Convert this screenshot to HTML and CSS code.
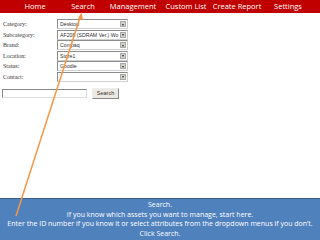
FILE: index.html
```html
<!DOCTYPE html>
<html>
<head>
<meta charset="utf-8">
<link rel="stylesheet" href="styles.css">
</head>
<body>
<div class="page">
  <nav class="nav">
    <span>Home</span>
    <span>Search</span>
    <span>Management</span>
    <span>Custom List</span>
    <span>Create Report</span>
    <span>Settings</span>
  </nav>
  <div class="form">
    <div class="row"><label>Category:</label><div class="sel"><span class="val">Desktop</span><span class="btn"></span></div></div>
    <div class="row"><label>Subcategory:</label><div class="sel"><span class="val">AF208 (SDRAM Ver.) Wo</span><span class="btn"></span></div></div>
    <div class="row"><label>Brand:</label><div class="sel"><span class="val">Compaq</span><span class="btn"></span></div></div>
    <div class="row"><label>Location:</label><div class="sel"><span class="val">Store1</span><span class="btn"></span></div></div>
    <div class="row"><label>Status:</label><div class="sel"><span class="val">Goodie</span><span class="btn"></span></div></div>
    <div class="row"><label>Contact:</label><div class="sel"><span class="val"></span><span class="btn"></span></div></div>
    <div class="search-row">
      <div class="input"></div>
      <div class="button">Search</div>
    </div>
  </div>
  <div class="callout">
    <p>Search.</p>
    <p>If you know which assets you want to manage, start here.</p>
    <p>Enter the ID number if you know it or select attributes from the dropdown menus if you don’t.</p>
    <p>Click Search.</p>
  </div>
  <svg class="arrow" width="320" height="240" viewBox="0 0 320 240">
    <line x1="16" y1="216" x2="80.5" y2="16" stroke="#f79646" stroke-width="1.5"/>
    <polygon points="81.5,12 78,19 83,20" fill="#f79646"/>
  </svg>
</div>
</body>
</html>
```
FILE: styles.css
```css
html, body {
  margin: 0;
  padding: 0;
  background: #fff;
}
.page {
  position: relative;
  width: 320px;
  height: 240px;
  overflow: hidden;
  display: flex;
  flex-direction: column;
}
.nav {
  height: 13px;
  background: #c00000;
  display: grid;
  grid-template-columns: 50px 46px 54px 52px 50px 52px;
  padding-left: 10px;
  color: #fff;
  font-family: "Open Sans", sans-serif;
  font-size: 7.5px;
  line-height: 13px;
  text-align: center;
  white-space: nowrap;
}
.form {
  padding: 6px 0 0 3px;
  font-family: "Liberation Serif", serif;
  font-size: 6px;
  color: #333;
}
.row {
  height: 10.5px;
  display: flex;
  align-items: center;
}
.row label {
  width: 54px;
}
.sel {
  width: 69px;
  height: 8px;
  border: 1px solid;
  border-color: #8c8c8c #d0d0d0 #d0d0d0 #8c8c8c;
  display: flex;
  align-items: center;
  font-family: "Liberation Sans", sans-serif;
  font-size: 5.2px;
  color: #333;
  background: #fff;
}
.val {
  flex: 1;
  padding-left: 2px;
  white-space: nowrap;
}
.btn {
  flex: none;
  width: 6px;
  height: 6px;
  margin-right: 1px;
  background: #d4d0c8;
  border: 1px solid #aaa;
  box-sizing: border-box;
  position: relative;
}
.btn::after {
  content: "";
  position: absolute;
  left: 1px;
  top: 1.5px;
  border-left: 1.5px solid transparent;
  border-right: 1.5px solid transparent;
  border-top: 2px solid #333;
}
.search-row {
  display: flex;
  align-items: center;
  gap: 5px;
  margin-top: 6px;
  margin-left: -1px;
}
.input {
  width: 83px;
  height: 7px;
  border: 1px solid;
  border-color: #888 #ddd #ddd #888;
}
.button {
  width: 25px;
  height: 9px;
  background: #ece9e2;
  border: 1px solid;
  border-color: #eee #888 #888 #eee;
  font-family: "Liberation Sans", sans-serif;
  font-size: 5.5px;
  line-height: 9px;
  text-align: center;
  color: #333;
}
.callout {
  margin-top: auto;
  height: 40px;
  background: #4f81bd;
  border-top: 1px solid #385d8a;
  color: #fff;
  font-family: "Open Sans", sans-serif;
  font-size: 7px;
  text-align: center;
  padding-top: 1px;
}
.callout p {
  margin: 0;
  line-height: 9.5px;
  white-space: nowrap;
}
.arrow {
  position: absolute;
  left: 0;
  top: 0;
}
```
